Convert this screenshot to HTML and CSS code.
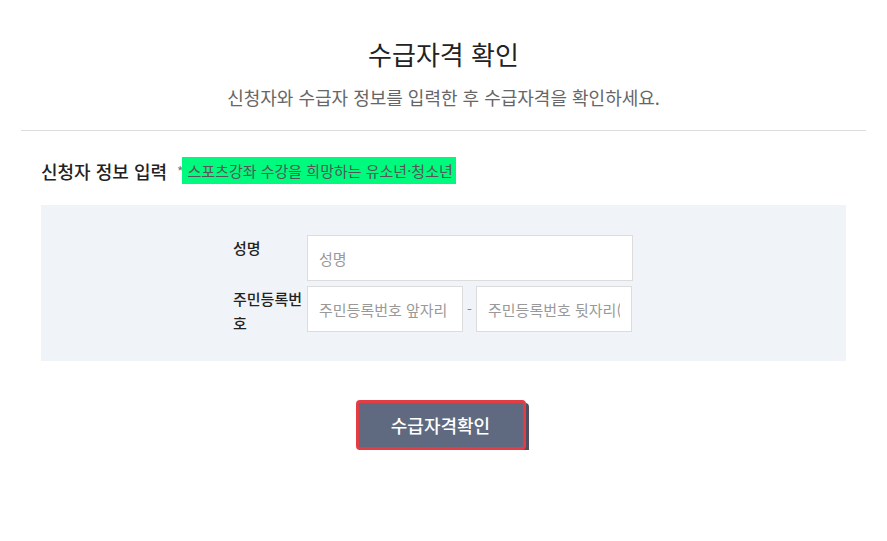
FILE: index.html
```html
<!DOCTYPE html>
<html lang="ko">
<head>
  <meta charset="UTF-8"/>
  <meta name="viewport" content="width=device-width, initial-scale=1.0"/>
  <title>수급자격 확인</title>
  <link rel="stylesheet" href="styles.css">
</head>
<body>
  <div id="page">
    <div class="head">
      <h1>수급자격 확인</h1>
      <p class="sub">신청자와 수급자 정보를 입력한 후 수급자격을 확인하세요.</p>
    </div>

    <div class="content">
      <div class="section-title">
        <h2>신청자 정보 입력</h2>
        <span class="star">*</span><span class="mark">스포츠강좌 수강을 희망하는 유소년·청소년</span>
      </div>

      <div class="form-box">
        <form id="checkForm">
          <div class="row">
            <label for="name">성명</label>
            <input type="text" id="name" placeholder="성명" />
          </div>
          <div class="row">
            <label for="jumin1">주민등록번호</label>
            <div class="split">
              <input type="text" id="jumin1" placeholder="주민등록번호 앞자리" />
              <span class="dash">-</span>
              <input type="password" id="jumin2" placeholder="주민등록번호 뒷자리(7자리)" />
            </div>
          </div>
        </form>
      </div>

      <div class="actions">
        <button type="button" class="btn">수급자격확인</button>
      </div>
    </div>
  </div>
</body>
</html>
```

FILE: styles.css
```css
body {
  margin: 0;
  background-color: #fff;
  font-family: "Noto Sans CJK KR", "Noto Sans", sans-serif;
  color: #222;
}
#page {
  padding: 0 21px;
}
.head {
  padding-top: 36px;
  padding-bottom: 21px;
  border-bottom: 1px solid #ddd;
  text-align: center;
}
h1 {
  margin: 0;
  font-size: 26px;
  line-height: 36px;
  font-weight: 400;
  color: #222;
}
.sub {
  margin: 13px 0 0;
  font-size: 18px;
  line-height: 24px;
  color: #666;
}
.content {
  padding: 0 20px;
}
.section-title {
  display: flex;
  align-items: center;
  margin-top: 26px;
  height: 27px;
}
h2 {
  margin: 0 10px 0 0;
  font-size: 18px;
  font-weight: 500;
  color: #222;
}
.star {
  font-size: 14px;
  color: #777;
  margin-right: -2px;
}
.mark {
  background-color: #00fa7d;
  color: #555;
  font-size: 15px;
  line-height: 27px;
  padding: 0 3px 0 6px;
}
.form-box {
  margin-top: 21px;
  background-color: #f0f3f7;
  padding: 30px 0 29px 192px;
}
.row {
  display: flex;
  width: 400px;
  height: 46px;
}
.row + .row {
  margin-top: 5px;
}
label {
  width: 70px;
  margin-right: 4px;
  padding-top: 1px;
  font-size: 15px;
  line-height: 24px;
  font-weight: 500;
  color: #222;
}
input {
  box-sizing: border-box;
  width: 326px;
  height: 46px;
  border: 1px solid #dcdcdc;
  padding: 0 11px;
  font-family: inherit;
  font-size: 15px;
  background-color: #fff;
  outline: none;
}
input::placeholder {
  color: #999;
}
.split {
  display: flex;
  align-items: center;
  width: 326px;
}
.split input {
  width: 156px;
}
.dash {
  width: 13px;
  text-align: center;
  color: #888;
  font-size: 14px;
}
.actions {
  display: flex;
  justify-content: center;
  margin-top: 39px;
  padding-right: 6px;
}
.btn {
  width: 170px;
  height: 50px;
  background-color: #5f6a80;
  color: #fff;
  border: 3px solid #e23d44;
  border-radius: 4px;
  box-shadow: 3px 3px 0 #4b5162;
  font-family: inherit;
  font-size: 18px;
  font-weight: 500;
  cursor: pointer;
}
.btn:hover {
  background-color: #4f596d;
}
```
